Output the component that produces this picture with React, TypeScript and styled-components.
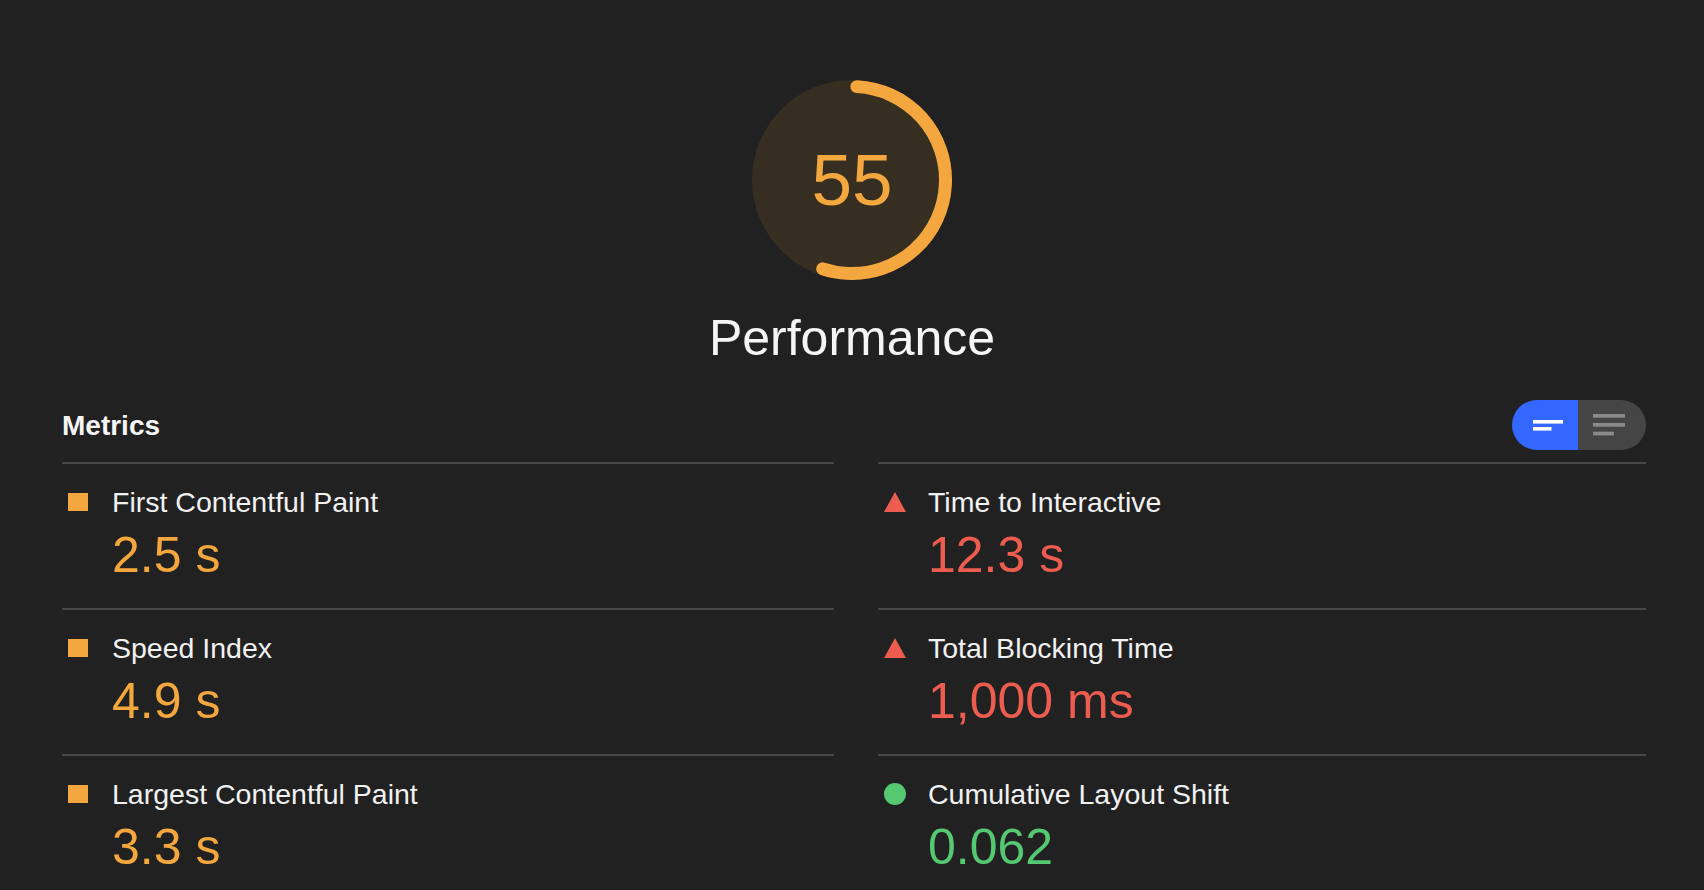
import React from "react";
import styled, { createGlobalStyle } from "styled-components";

const GlobalStyle = createGlobalStyle`
  html, body {
    margin: 0;
    padding: 0;
    background: #212121;
    overflow: hidden;
    height: 100%;
  }
  body {
    font-family: "Liberation Sans", Arial, Helvetica, sans-serif;
    color: #f1f1f1;
  }
  * { box-sizing: border-box; }
`;

const Page = styled.div`
  width: 100%;
  height: 890px;
  overflow: hidden;
  background: #212121;
`;

const GaugeSection = styled.section`
  display: flex;
  flex-direction: column;
  align-items: center;
  padding-top: 80px;
`;

const GaugeWrap = styled.div`
  display: grid;
  width: 200px;
  height: 200px;
  place-items: center;
  & > * {
    grid-area: 1 / 1;
  }
`;

const GaugeScore = styled.div`
  font-size: 73px;
  line-height: 72px;
  color: #f4a73e;
`;

const GaugeLabel = styled.div`
  margin-top: 28px;
  font-size: 50px;
  line-height: 60px;
  color: #f5f5f5;
`;

const Content = styled.div`
  padding: 0 58px 0 62px;
  margin-top: 32px;
`;

const Header = styled.div`
  display: flex;
  align-items: center;
  justify-content: space-between;
  height: 50px;
`;

const HeaderTitle = styled.h2`
  margin: 0;
  padding-top: 2px;
  font-size: 28px;
  line-height: 34px;
  font-weight: 700;
  color: #f5f5f5;
`;

const Toggle = styled.div`
  display: flex;
  width: 134px;
  height: 50px;
  border-radius: 25px;
  overflow: hidden;
`;

const ToggleButton = styled.button<{ $active?: boolean; $w: number }>`
  display: flex;
  align-items: center;
  justify-content: ${(p) => (p.$active ? "flex-end" : "flex-start")};
  width: ${(p) => p.$w}px;
  height: 100%;
  border: 0;
  margin: 0;
  padding: ${(p) => (p.$active ? "0 15px 0 0" : "0 0 0 15px")};
  background: ${(p) => (p.$active ? "#3367ff" : "#454545")};
  cursor: pointer;
`;

const MetricsGrid = styled.div`
  display: grid;
  grid-template-columns: 772px 768px;
  column-gap: 44px;
  margin-top: 12px;
`;

const Metric = styled.div`
  display: grid;
  grid-template-columns: 50px 1fr;
  grid-template-rows: auto auto;
  align-content: start;
  height: 146px;
  padding-top: 21px;
  border-top: 2px solid #474747;
`;

const IconCell = styled.div`
  grid-row: 1;
  grid-column: 1;
  align-self: center;
  display: flex;
  padding-left: 6px;
`;

const MetricTitle = styled.div`
  grid-row: 1;
  grid-column: 2;
  font-size: 28.5px;
  line-height: 34px;
  color: #f1f1f1;
  white-space: nowrap;
`;

const MetricValue = styled.div<{ $color: string }>`
  grid-row: 2;
  grid-column: 2;
  margin-top: 8px;
  font-size: 50px;
  line-height: 56px;
  color: ${(p) => p.$color};
  white-space: nowrap;
`;

const Square = styled.span`
  display: block;
  width: 20px;
  height: 18px;
  background: #f4a73e;
`;

const Dot = styled.span`
  display: block;
  width: 22px;
  height: 22px;
  border-radius: 50%;
  background: #55c872;
`;

type Rating = "average" | "fail" | "pass";

const COLORS: Record<Rating, string> = {
  average: "#f4a73e",
  fail: "#ec5d4f",
  pass: "#55c872",
};

const Triangle = () => (
  <svg width="22" height="20" viewBox="0 0 22 20">
    <polygon points="11,0 22,20 0,20" fill={COLORS.fail} />
  </svg>
);

const RatingIcon = ({ rating }: { rating: Rating }) => {
  if (rating === "fail") return <Triangle />;
  if (rating === "pass") return <Dot />;
  return <Square />;
};

const metrics: { title: string; value: string; rating: Rating }[] = [
  { title: "First Contentful Paint", value: "2.5 s", rating: "average" },
  { title: "Time to Interactive", value: "12.3 s", rating: "fail" },
  { title: "Speed Index", value: "4.9 s", rating: "average" },
  { title: "Total Blocking Time", value: "1,000 ms", rating: "fail" },
  { title: "Largest Contentful Paint", value: "3.3 s", rating: "average" },
  { title: "Cumulative Layout Shift", value: "0.062", rating: "pass" },
];

const Gauge = ({ score }: { score: number }) => {
  const r = 93.5;
  const c = 2 * Math.PI * r;
  const dash = (195 / 360) * c;
  return (
    <GaugeWrap>
      <svg width="200" height="200" viewBox="0 0 200 200">
        <circle cx="100" cy="100" r="100" fill="#372e22" />
        <circle
          cx="100"
          cy="100"
          r={r}
          fill="none"
          stroke="#f4a73e"
          strokeWidth="13"
          strokeLinecap="round"
          strokeDasharray={`${dash} ${c}`}
          transform="rotate(-87 100 100)"
        />
      </svg>
      <GaugeScore>{score}</GaugeScore>
    </GaugeWrap>
  );
};

export default function App() {
  return (
    <Page>
      <GlobalStyle />
      <GaugeSection>
        <Gauge score={55} />
        <GaugeLabel>Performance</GaugeLabel>
      </GaugeSection>
      <Content>
        <Header>
          <HeaderTitle>Metrics</HeaderTitle>
          <Toggle>
            <ToggleButton $active $w={66} aria-label="Compact view">
              <svg width="30" height="11" viewBox="0 0 30 11">
                <rect x="0" y="0" width="30" height="3.6" fill="#ffffff" />
                <rect x="0" y="7" width="18.5" height="3.6" fill="#ffffff" />
              </svg>
            </ToggleButton>
            <ToggleButton $w={68} aria-label="Expanded view">
              <svg width="32" height="22" viewBox="0 0 32 22">
                <rect x="0" y="0" width="32" height="3.7" fill="#8a8a8a" />
                <rect x="0" y="9" width="32" height="3.7" fill="#8a8a8a" />
                <rect x="0" y="17.7" width="21" height="3.7" fill="#8a8a8a" />
              </svg>
            </ToggleButton>
          </Toggle>
        </Header>
        <MetricsGrid>
          {metrics.map((m) => (
            <Metric key={m.title}>
              <IconCell>
                <RatingIcon rating={m.rating} />
              </IconCell>
              <MetricTitle>{m.title}</MetricTitle>
              <MetricValue $color={COLORS[m.rating]}>{m.value}</MetricValue>
            </Metric>
          ))}
        </MetricsGrid>
      </Content>
    </Page>
  );
}
